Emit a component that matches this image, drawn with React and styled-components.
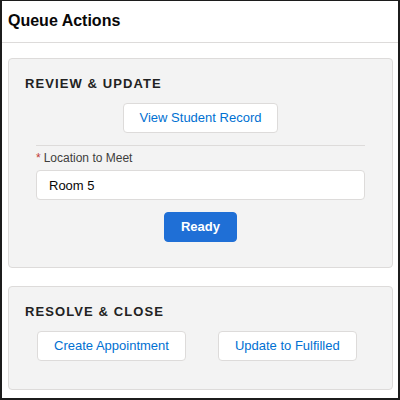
import React from 'react'
import styled, { createGlobalStyle } from 'styled-components'

const GlobalStyle = createGlobalStyle`
  html, body {
    margin: 0;
    padding: 0;
    background: #ffffff;
  }
  * {
    box-sizing: border-box;
  }
`

const Frame = styled.div`
  width: 400px;
  height: 400px;
  border-style: solid;
  border-color: #1c1c1c;
  border-width: 1px 2px 2px 2px;
  background: #ffffff;
  font-family: "Liberation Sans", Arial, sans-serif;
  color: #080707;
  display: flex;
  flex-direction: column;
`

const Header = styled.div`
  height: 42px;
  padding: 10px 6px 0;
  border-bottom: 1px solid #dddbda;
  font-size: 16px;
  line-height: 20px;
  font-weight: bold;
`

const Body = styled.div`
  display: flex;
  flex-direction: column;
  gap: 18px;
  padding: 15px 5px 0 6px;
`

const Card = styled.section`
  background: #f3f3f3;
  border: 1px solid #dddbda;
  border-radius: 4px;
  padding: 17px 16px ${p => p.$bottom}px;
  display: flex;
  flex-direction: column;
`

const Heading = styled.h2`
  margin: 0 0 11px;
  font-size: 13px;
  line-height: 16px;
  font-weight: bold;
  letter-spacing: 1.1px;
  color: #222222;
`

const Center = styled.div`
  display: flex;
  justify-content: center;
`

const Button = styled.button`
  height: 30px;
  padding: 0 16px;
  border: 1px solid ${p => (p.$brand ? '#1f6fd6' : '#dddbda')};
  border-radius: 4px;
  background: ${p => (p.$brand ? '#1f6fd6' : '#ffffff')};
  color: ${p => (p.$brand ? '#ffffff' : '#0070d2')};
  font-family: inherit;
  font-size: 13px;
  font-weight: ${p => (p.$brand ? 'bold' : 'normal')};
  line-height: 28px;
  cursor: pointer;
`

const Form = styled.div`
  padding: 0 11px 0 11px;
  display: flex;
  flex-direction: column;
`

const Divider = styled.hr`
  margin: 12px 0 0;
  border: none;
  border-top: 1px solid #dddbda;
`

const Label = styled.label`
  margin-top: 4px;
  font-size: 12px;
  line-height: 16px;
  color: #3e3e3c;
  display: flex;
  gap: 3px;
`

const Required = styled.abbr`
  color: #c23934;
  text-decoration: none;
  font-size: 12px;
`

const Input = styled.input`
  margin-top: 4px;
  height: 30px;
  padding: 0 12px;
  border: 1px solid #dddbda;
  border-radius: 4px;
  background: #ffffff;
  font-family: inherit;
  font-size: 13px;
  color: #080707;
  outline: none;
`

const ReadyRow = styled(Center)`
  margin-top: 12px;
`

const ButtonRow = styled.div`
  display: flex;
  gap: 32px;
  padding-left: 12px;
`

export default function App() {
  return (
    <>
      <GlobalStyle />
      <Frame>
        <Header>Queue Actions</Header>
        <Body>
          <Card $bottom={25}>
            <Heading>REVIEW &amp; UPDATE</Heading>
            <Center>
              <Button>View Student Record</Button>
            </Center>
            <Form>
              <Divider />
              <Label>
                <Required title="required">*</Required>
                Location to Meet
              </Label>
              <Input defaultValue="Room 5" />
            </Form>
            <ReadyRow>
              <Button $brand>Ready</Button>
            </ReadyRow>
          </Card>
          <Card $bottom={28}>
            <Heading>RESOLVE &amp; CLOSE</Heading>
            <ButtonRow>
              <Button>Create Appointment</Button>
              <Button>Update to Fulfilled</Button>
            </ButtonRow>
          </Card>
        </Body>
      </Frame>
    </>
  )
}
